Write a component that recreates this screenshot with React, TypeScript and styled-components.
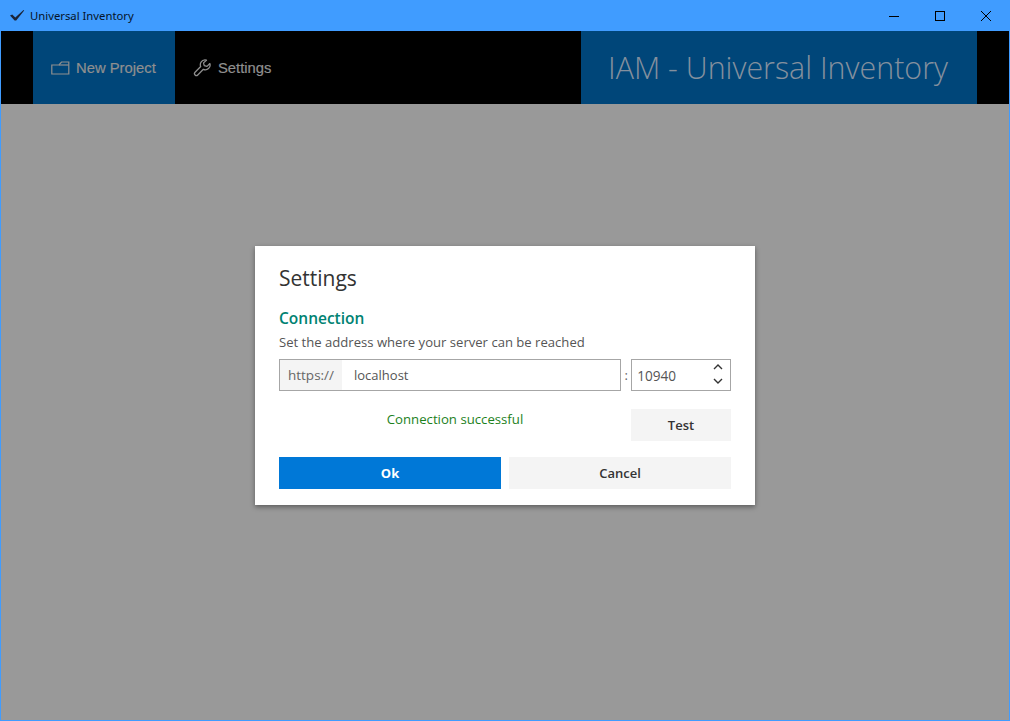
import React from "react";
import styled, { createGlobalStyle } from "styled-components";

const Global = createGlobalStyle`
  html, body { margin: 0; padding: 0; height: 100%; background: #999; }
  #root { height: 100%; }
  * { box-sizing: border-box; }
`;

const Win = styled.div`
  width: 1010px;
  height: 721px;
  display: flex;
  flex-direction: column;
  border: 1px solid #409cff;
  border-top: 0;
  background: #999;
  font-family: "Open Sans", "Noto Sans", sans-serif;
  overflow: hidden;
`;

const TitleBar = styled.div`
  height: 31px;
  flex: none;
  margin: 0 -1px;
  background: #409cff;
  display: flex;
  align-items: center;
  padding: 0 1px 0 9px;
  color: #06142a;
`;

const AppIcon = styled.svg`
  width: 16px;
  height: 16px;
  margin-right: 5px;
`;

const TitleText = styled.span`
  font-family: "Noto Sans", sans-serif;
  font-size: 11.3px;
  flex: 1;
`;

const WinBtn = styled.div`
  width: 46px;
  height: 31px;
  display: flex;
  align-items: center;
  justify-content: center;
  & svg { display: block; }
`;

const Header = styled.header`
  height: 73px;
  flex: none;
  background: #000;
  display: flex;
  padding: 0 32px;
`;

const NavItem = styled.div<{ $active?: boolean; $width: number }>`
  width: ${(p) => p.$width}px;
  background: ${(p) => (p.$active ? "#004679" : "#000")};
  display: flex;
  align-items: center;
  padding-left: 18px;
  gap: 6px;
  color: #8f8f8f;
  font-family: "Liberation Sans", Arial, sans-serif;
  font-size: 14.8px;
  -webkit-text-stroke: 0.2px #8f8f8f;
`;

const Brand = styled.div`
  margin-left: auto;
  width: 396px;
  background: #004679;
  color: #84909e;
  font-family: "Open Sans", sans-serif;
  font-weight: 300;
  font-size: 30.4px;
  display: flex;
  align-items: center;
  justify-content: center;
  padding: 0 2px 1px 0;
  white-space: nowrap;
`;

const Backdrop = styled.main`
  flex: 1;
  display: flex;
  justify-content: center;
  align-items: flex-start;
  padding-top: 142px;
  background: #999;
`;

const Dialog = styled.section`
  width: 500px;
  height: 259px;
  background: #fff;
  box-shadow: 0 2px 5px rgba(0, 0, 0, 0.4);
  padding: 18px 24px 16px;
  color: #333;
`;

const Heading = styled.h1`
  margin: 0;
  font-size: 21px;
  line-height: 28px;
  font-weight: 500;
  color: #333;
`;

const SubHeading = styled.h2`
  margin: 16px 0 0;
  font-size: 15.5px;
  line-height: 20px;
  font-weight: 600;
  color: #008272;
`;

const Hint = styled.p`
  margin: 4px 0 0;
  font-size: 13.1px;
  line-height: 20px;
  color: #555;
`;

const AddressRow = styled.div`
  display: flex;
  align-items: center;
  margin-top: 7px;
  height: 32px;
`;

const HostBox = styled.div`
  width: 343px;
  height: 32px;
  border: 1px solid #a6a6a6;
  display: flex;
  align-items: stretch;
`;

const Prefix = styled.span`
  width: 62px;
  background: #f4f4f4;
  color: #666;
  font-size: 13.5px;
  display: flex;
  align-items: center;
  justify-content: center;
`;

const HostText = styled.span`
  padding-left: 12px;
  font-size: 13px;
  color: #555;
  display: flex;
  align-items: center;
`;

const Colon = styled.span`
  width: 10px;
  text-align: center;
  font-size: 13px;
  color: #666;
`;

const PortBox = styled.div`
  width: 100px;
  height: 32px;
  border: 1px solid #a6a6a6;
  display: flex;
  align-items: center;
  justify-content: space-between;
  padding: 0 6px 0 5px;
  font-size: 13.6px;
  color: #555;
`;

const Spin = styled.svg`
  width: 12px;
  height: 26px;
  display: block;
`;

const StatusRow = styled.div`
  display: flex;
  margin-top: 18px;
  height: 32px;
`;

const Status = styled.span`
  flex: 1;
  text-align: center;
  font-size: 13.2px;
  line-height: 20px;
  color: #1c811c;
`;

const Button = styled.div<{ $primary?: boolean; $width: number }>`
  width: ${(p) => p.$width}px;
  height: 32px;
  background: ${(p) => (p.$primary ? "#0078d7" : "#f4f4f4")};
  color: ${(p) => (p.$primary ? "#fff" : "#333")};
  font-size: 13px;
  font-weight: ${(p) => (p.$primary ? 700 : 600)};
  display: flex;
  align-items: center;
  justify-content: center;
`;

const Actions = styled.div`
  display: flex;
  gap: 8px;
  margin-top: 16px;
`;

export default function App() {
  return (
    <>
      <Global />
      <Win>
        <TitleBar>
          <AppIcon viewBox="0 0 16 16">
            <path d="M1 7.5 L3.2 6.5 L6.3 9.5 L14.5 2 L15.2 2.6 L7.2 12.5 L5.6 12.5 Z" fill="#1a2438" />
          </AppIcon>
          <TitleText>Universal Inventory</TitleText>
          <WinBtn>
            <svg width="10" height="10" viewBox="0 0 10 10">
              <path d="M0 5.5H10" stroke="#000" strokeWidth="1" />
            </svg>
          </WinBtn>
          <WinBtn>
            <svg width="10" height="10" viewBox="0 0 10 10">
              <rect x="0.5" y="0.5" width="9" height="9" fill="none" stroke="#000" strokeWidth="1" />
            </svg>
          </WinBtn>
          <WinBtn>
            <svg width="10" height="10" viewBox="0 0 10 10">
              <path d="M0 0L10 10M10 0L0 10" stroke="#000" strokeWidth="1" />
            </svg>
          </WinBtn>
        </TitleBar>
        <Header>
          <NavItem $active $width={142}>
            <svg width="19" height="14" viewBox="0 0 19 14" fill="none" stroke="#8f8f8f" strokeWidth="1.2">
              <path d="M.8 13V4H8L10.5 1H17.8V13Z" />
              <path d="M8 4H17.8" />
            </svg>
            <span>New Project</span>
          </NavItem>
          <NavItem $width={120}>
            <svg width="19" height="19" viewBox="0 0 24 24" fill="none" stroke="#8f8f8f" strokeWidth="1.6" strokeLinejoin="round">
              <path d="M15 2.5a6 6 0 0 0-5.3 8.3L2.6 18a2.4 2.4 0 0 0 3.4 3.4l7.1-7.1A6 6 0 0 0 21.3 7l-3.6 3.6-3.5-1-.9-3.4L17 2.8a6 6 0 0 0-2-.3Z" />
            </svg>
            <span>Settings</span>
          </NavItem>
          <Brand>IAM - Universal Inventory</Brand>
        </Header>
        <Backdrop>
          <Dialog>
            <Heading>Settings</Heading>
            <SubHeading>Connection</SubHeading>
            <Hint>Set the address where your server can be reached</Hint>
            <AddressRow>
              <HostBox>
                <Prefix>https://</Prefix>
                <HostText>localhost</HostText>
              </HostBox>
              <Colon>:</Colon>
              <PortBox>
                <span>10940</span>
                <Spin viewBox="0 0 12 26" fill="none" stroke="#333" strokeWidth="1.4">
                  <path d="M2 7L6 3L10 7" />
                  <path d="M2 17L6 21L10 17" />
                </Spin>
              </PortBox>
            </AddressRow>
            <StatusRow>
              <Status>Connection successful</Status>
              <Button $width={100}>Test</Button>
            </StatusRow>
            <Actions>
              <Button $primary $width={222}>Ok</Button>
              <Button $width={222}>Cancel</Button>
            </Actions>
          </Dialog>
        </Backdrop>
      </Win>
    </>
  );
}
